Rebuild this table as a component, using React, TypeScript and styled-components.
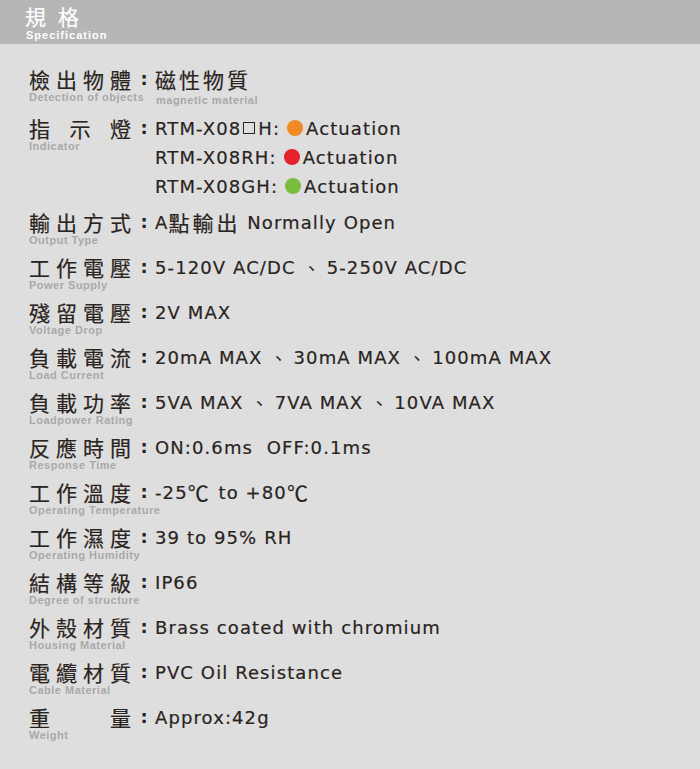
import React from "react";
import styled, { createGlobalStyle } from "styled-components";

const Global = createGlobalStyle`
  html, body { margin: 0; padding: 0; background: #dedede; }
  body { width: 700px; height: 769px; overflow: hidden; }
`;

const INK = "#2a2421";
const CJK = `"Noto Sans CJK TC", "Noto Sans CJK SC", sans-serif`;
const LATIN = `"DejaVu Sans", sans-serif`;
const SUBFONT = `"Liberation Sans", Arial, sans-serif`;

const Page = styled.div`
  width: 700px;
  min-height: 769px;
  background: #dedede;
  font-family: ${LATIN};
  color: ${INK};
`;

const Header = styled.header`
  height: 44px;
  box-sizing: border-box;
  padding: 4px 0 0 25px;
  background: #b6b6b6;
  color: #ffffff;
`;

const HeaderTitle = styled.div`
  font-family: ${CJK};
  font-size: 21px;
  font-weight: 400;
  line-height: 25px;
  letter-spacing: 12px;
  -webkit-text-stroke: 0.2px #ffffff;
`;

const HeaderSub = styled.div`
  font-family: ${SUBFONT};
  font-weight: 700;
  font-size: 11px;
  line-height: 12px;
  letter-spacing: 1px;
  margin-left: 1px;
`;

const List = styled.div`
  display: flex;
  flex-direction: column;
  padding: 24px 0 0 29px;
`;

const Row = styled.div<{ $bottom?: number }>`
  display: grid;
  grid-template-columns: 102px 24px 1fr;
  align-items: start;
  margin-bottom: ${(p) => p.$bottom ?? 10}px;
`;

const Label = styled.div`
  display: flex;
  flex-direction: column;
`;

const LabelTitle = styled.div`
  display: flex;
  justify-content: space-between;
  height: 22px;
  font-family: ${CJK};
  font-size: 21px;
  font-weight: 400;
  line-height: 22px;
  color: ${INK};
  -webkit-text-stroke: 0.2px ${INK};
`;

const Sub = styled.div`
  font-family: ${SUBFONT};
  font-weight: 700;
  font-size: 11px;
  line-height: 12px;
  letter-spacing: 0.5px;
  color: #a9a9a9;
  white-space: nowrap;
`;

const LabelSub = styled(Sub)`
  margin-top: 1px;
`;

const ValueSub = styled(Sub)`
  margin-top: -3px;
  margin-left: 1px;
`;

const Colon = styled.div`
  height: 22px;
  padding-left: 2px;
  font-family: "DejaVu Sans", sans-serif;
  font-weight: 700;
  font-size: 18px;
  line-height: 22px;
  text-align: center;
  color: ${INK};
`;

const Value = styled.div`
  display: flex;
  flex-direction: column;
  gap: 7px;
`;

const Line = styled.div`
  display: flex;
  align-items: center;
  height: 22px;
  font-family: ${LATIN};
  font-size: 18px;
  letter-spacing: 1.1px;
  white-space: pre;
  color: ${INK};
  -webkit-text-stroke: 0.2px ${INK};
`;

const Han = styled.span`
  font-family: ${CJK};
  font-size: 21px;
  font-weight: 400;
  letter-spacing: 3px;
  -webkit-text-stroke: 0.2px ${INK};
`;

const Sep = styled.span`
  font-family: ${CJK};
  font-size: 18px;
  margin: 0 5px 0 7px;
`;

const Box = styled.span`
  display: inline-block;
  width: 10px;
  height: 10px;
  border: 1.5px solid ${INK};
  margin: 0 3px 0 2px;
`;

const Dot = styled.span<{ $color: string }>`
  display: inline-block;
  width: 16px;
  height: 16px;
  border-radius: 50%;
  background: ${(p) => p.$color};
  margin: 0 3px 0 7px;
`;

type Spec = {
  title: string;
  sub: string;
  value: React.ReactNode;
};

const withSep = (parts: string[]) =>
  parts.map((p, i) => (
    <React.Fragment key={i}>
      {i > 0 && <Sep>、</Sep>}
      {p}
    </React.Fragment>
  ));

const specs: Spec[] = [
  {
    title: "工作電壓",
    sub: "Power Supply",
    value: <Line>{withSep(["5-120V AC/DC", "5-250V AC/DC"])}</Line>,
  },
  { title: "殘留電壓", sub: "Voltage Drop", value: <Line>2V MAX</Line> },
  {
    title: "負載電流",
    sub: "Load Current",
    value: <Line>{withSep(["20mA MAX", "30mA MAX", "100mA MAX"])}</Line>,
  },
  {
    title: "負載功率",
    sub: "Loadpower Rating",
    value: <Line>{withSep(["5VA MAX", "7VA MAX", "10VA MAX"])}</Line>,
  },
  { title: "反應時間", sub: "Response Time", value: <Line>ON:0.6ms  OFF:0.1ms</Line> },
  {
    title: "工作溫度",
    sub: "Operating Temperature",
    value: (
      <Line>
        -25<Han>℃</Han> to +80<Han>℃</Han>
      </Line>
    ),
  },
  { title: "工作濕度", sub: "Operating Humidity", value: <Line>39 to 95% RH</Line> },
  { title: "結構等級", sub: "Degree of structure", value: <Line>IP66</Line> },
  {
    title: "外殼材質",
    sub: "Housing Material",
    value: <Line>Brass coated with chromium</Line>,
  },
  { title: "電纜材質", sub: "Cable Material", value: <Line>PVC Oil Resistance</Line> },
  { title: "重量", sub: "Weight", value: <Line>Approx:42g</Line> },
];

const SpecLabel: React.FC<{ title: string; sub: string }> = ({ title, sub }) => (
  <Label>
    <LabelTitle>
      {Array.from(title).map((c, i) => (
        <span key={i}>{c}</span>
      ))}
    </LabelTitle>
    <LabelSub>{sub}</LabelSub>
  </Label>
);

export default function App() {
  return (
    <Page>
      <Global />
      <Header>
        <HeaderTitle>規格</HeaderTitle>
        <HeaderSub>Specification</HeaderSub>
      </Header>
      <List>
        <Row $bottom={11}>
          <SpecLabel title="檢出物體" sub="Detection of objects" />
          <Colon>:</Colon>
          <Value>
            <Line>
              <Han>磁性物質</Han>
            </Line>
            <ValueSub>magnetic material</ValueSub>
          </Value>
        </Row>
        <Row $bottom={14}>
          <SpecLabel title="指示燈" sub="Indicator" />
          <Colon>:</Colon>
          <Value>
            <Line>
              RTM-X08
              <Box />
              H:
              <Dot $color="#f18a24" />
              Actuation
            </Line>
            <Line>
              RTM-X08RH:
              <Dot $color="#e3222a" />
              Actuation
            </Line>
            <Line>
              RTM-X08GH:
              <Dot $color="#7bbb3e" />
              Actuation
            </Line>
          </Value>
        </Row>
        <Row>
          <SpecLabel title="輸出方式" sub="Output Type" />
          <Colon>:</Colon>
          <Value>
            <Line>
              A<Han>點輸出</Han> Normally Open
            </Line>
          </Value>
        </Row>
        {specs.map((s) => (
          <Row key={s.title}>
            <SpecLabel title={s.title} sub={s.sub} />
            <Colon>:</Colon>
            <Value>{s.value}</Value>
          </Row>
        ))}
      </List>
    </Page>
  );
}
